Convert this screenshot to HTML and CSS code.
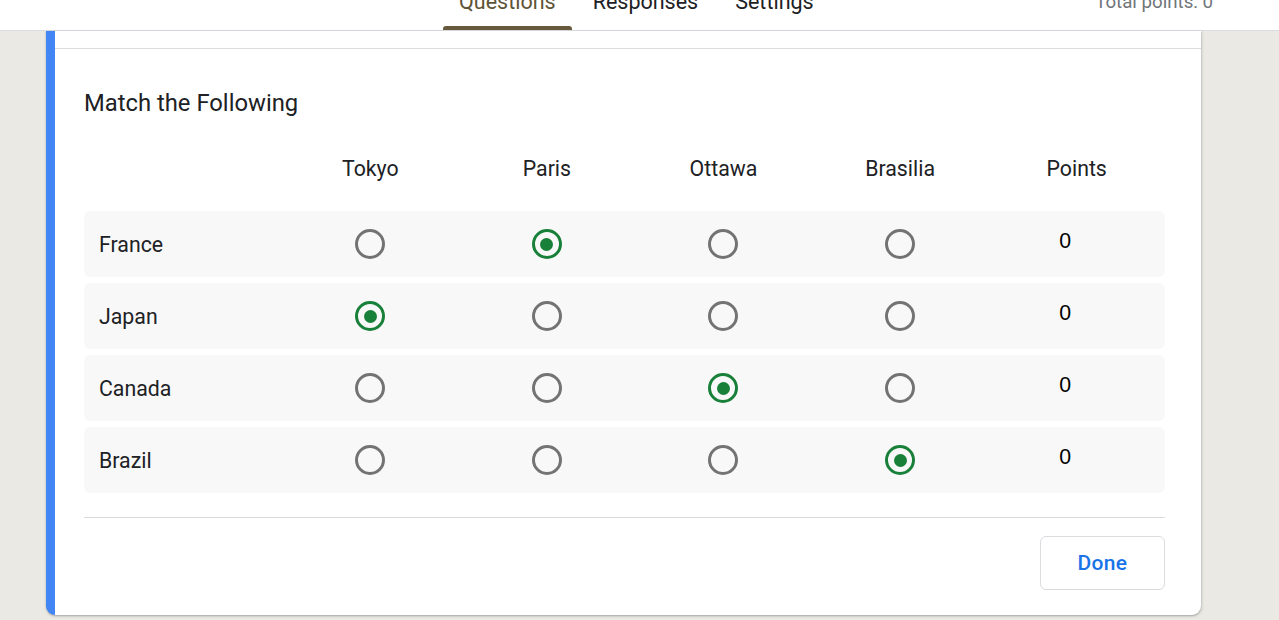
FILE: index.html
```html
<!DOCTYPE html>
<html lang="en">
<head>
<meta charset="utf-8">
<title>Match the Following</title>
<link rel="stylesheet" href="styles.css">
</head>
<body>
<header class="topbar">
  <nav class="tabs">
    <div class="tab active">Questions</div>
    <div class="tab">Responses</div>
    <div class="tab">Settings</div>
  </nav>
  <div class="total">Total points: 0</div>
</header>
<main class="page">
  <section class="card">
    <div class="card-top"></div>
    <div class="card-body">
      <h2 class="title">Match the Following</h2>
      <div class="grid head">
        <div></div>
        <div class="col">Tokyo</div>
        <div class="col">Paris</div>
        <div class="col">Ottawa</div>
        <div class="col">Brasilia</div>
        <div class="col">Points</div>
      </div>
      <div class="rows">
        <div class="grid row">
          <div class="label">France</div>
          <div class="cell"><span class="radio"></span></div>
          <div class="cell"><span class="radio on"></span></div>
          <div class="cell"><span class="radio"></span></div>
          <div class="cell"><span class="radio"></span></div>
          <div class="cell"><span class="pts">0</span></div>
        </div>
        <div class="grid row">
          <div class="label">Japan</div>
          <div class="cell"><span class="radio on"></span></div>
          <div class="cell"><span class="radio"></span></div>
          <div class="cell"><span class="radio"></span></div>
          <div class="cell"><span class="radio"></span></div>
          <div class="cell"><span class="pts">0</span></div>
        </div>
        <div class="grid row">
          <div class="label">Canada</div>
          <div class="cell"><span class="radio"></span></div>
          <div class="cell"><span class="radio"></span></div>
          <div class="cell"><span class="radio on"></span></div>
          <div class="cell"><span class="radio"></span></div>
          <div class="cell"><span class="pts">0</span></div>
        </div>
        <div class="grid row">
          <div class="label">Brazil</div>
          <div class="cell"><span class="radio"></span></div>
          <div class="cell"><span class="radio"></span></div>
          <div class="cell"><span class="radio"></span></div>
          <div class="cell"><span class="radio on"></span></div>
          <div class="cell"><span class="pts">0</span></div>
        </div>
      </div>
      <div class="footer">
        <button class="done">Done</button>
      </div>
    </div>
  </section>
</main>
</body>
</html>
```
FILE: styles.css
```css
* { box-sizing: border-box; }
html, body { margin: 0; padding: 0; }
body {
  background: #eae9e4;
  font-family: Roboto, "Liberation Sans", sans-serif;
  color: #202124;
  height: 620px;
  overflow: hidden;
}
.topbar {
  height: 31px;
  background: #fff;
  border-bottom: 1px solid #dadce0;
  display: flex;
  align-items: flex-end;
  padding-left: 443px;
  padding-right: 66px;
}
.tabs {
  display: flex;
  align-items: flex-end;
  gap: 5px;
}
.tab {
  position: relative;
  font-size: 21.5px;
  line-height: 20px;
  padding: 0 16px 18px;
  color: #202124;
}
.tab.active { color: #5e5436; }
.tab.active::after {
  content: "";
  position: absolute;
  left: 0;
  right: 0;
  bottom: 0;
  height: 4px;
  background: #675a3c;
  border-radius: 3px 3px 0 0;
}
.total {
  margin-left: auto;
  font-size: 18.7px;
  line-height: 20px;
  padding-bottom: 18px;
  color: #70757a;
}
.page {
  padding-left: 46px;
}
.card {
  width: 1155px;
  background: #fff;
  border-left: 9px solid #4285f4;
  border-radius: 0 0 9px 9px;
  box-shadow: 0 1px 2px rgba(60,64,67,.3), 1px 1px 3px rgba(60,64,67,.15);
}
.card-top {
  height: 18px;
  border-bottom: 1px solid #dadce0;
}
.card-body {
  padding: 38px 36px 25px 29px;
}
.title {
  margin: 0;
  font-size: 23.8px;
  font-weight: 400;
  line-height: 32px;
  color: #202124;
}
.grid {
  display: grid;
  grid-template-columns: 198px repeat(5, 1fr);
  align-items: center;
}
.head {
  margin-top: 38px;
  height: 24px;
  line-height: 24px;
  font-size: 21.3px;
  margin-bottom: 30px;
}
.col { text-align: center; }
.rows {
  display: flex;
  flex-direction: column;
  gap: 7px;
}
.row {
  height: 66px;
  background: #f8f8f8;
  border-radius: 6px;
}
.rows .row + .row { margin-top: -1px; }
.label {
  padding-left: 15px;
  font-size: 21.3px;
  color: #202124;
}
.cell {
  display: flex;
  justify-content: center;
  align-items: center;
}
.radio {
  width: 30px;
  height: 30px;
  border: 3px solid #737373;
  border-radius: 50%;
  display: flex;
  align-items: center;
  justify-content: center;
}
.radio.on { border-color: #188038; }
.radio.on::before {
  content: "";
  width: 13px;
  height: 13px;
  border-radius: 50%;
  background: #188038;
}
.pts {
  width: 35px;
  font-family: "Liberation Sans", Arial, sans-serif;
  font-size: 21.3px;
  line-height: 24px;
  color: #000;
  padding-bottom: 7px;
}
.footer {
  margin-top: 24px;
  border-top: 1px solid #dadce0;
  padding-top: 18px;
  display: flex;
  justify-content: flex-end;
}
.done {
  width: 125px;
  height: 54px;
  background: #fff;
  border: 1px solid #dadce0;
  border-radius: 6px;
  color: #1a73e8;
  font-family: Roboto, "Liberation Sans", sans-serif;
  font-weight: 500;
  font-size: 21px;
  letter-spacing: 0.3px;
  cursor: pointer;
}
```
